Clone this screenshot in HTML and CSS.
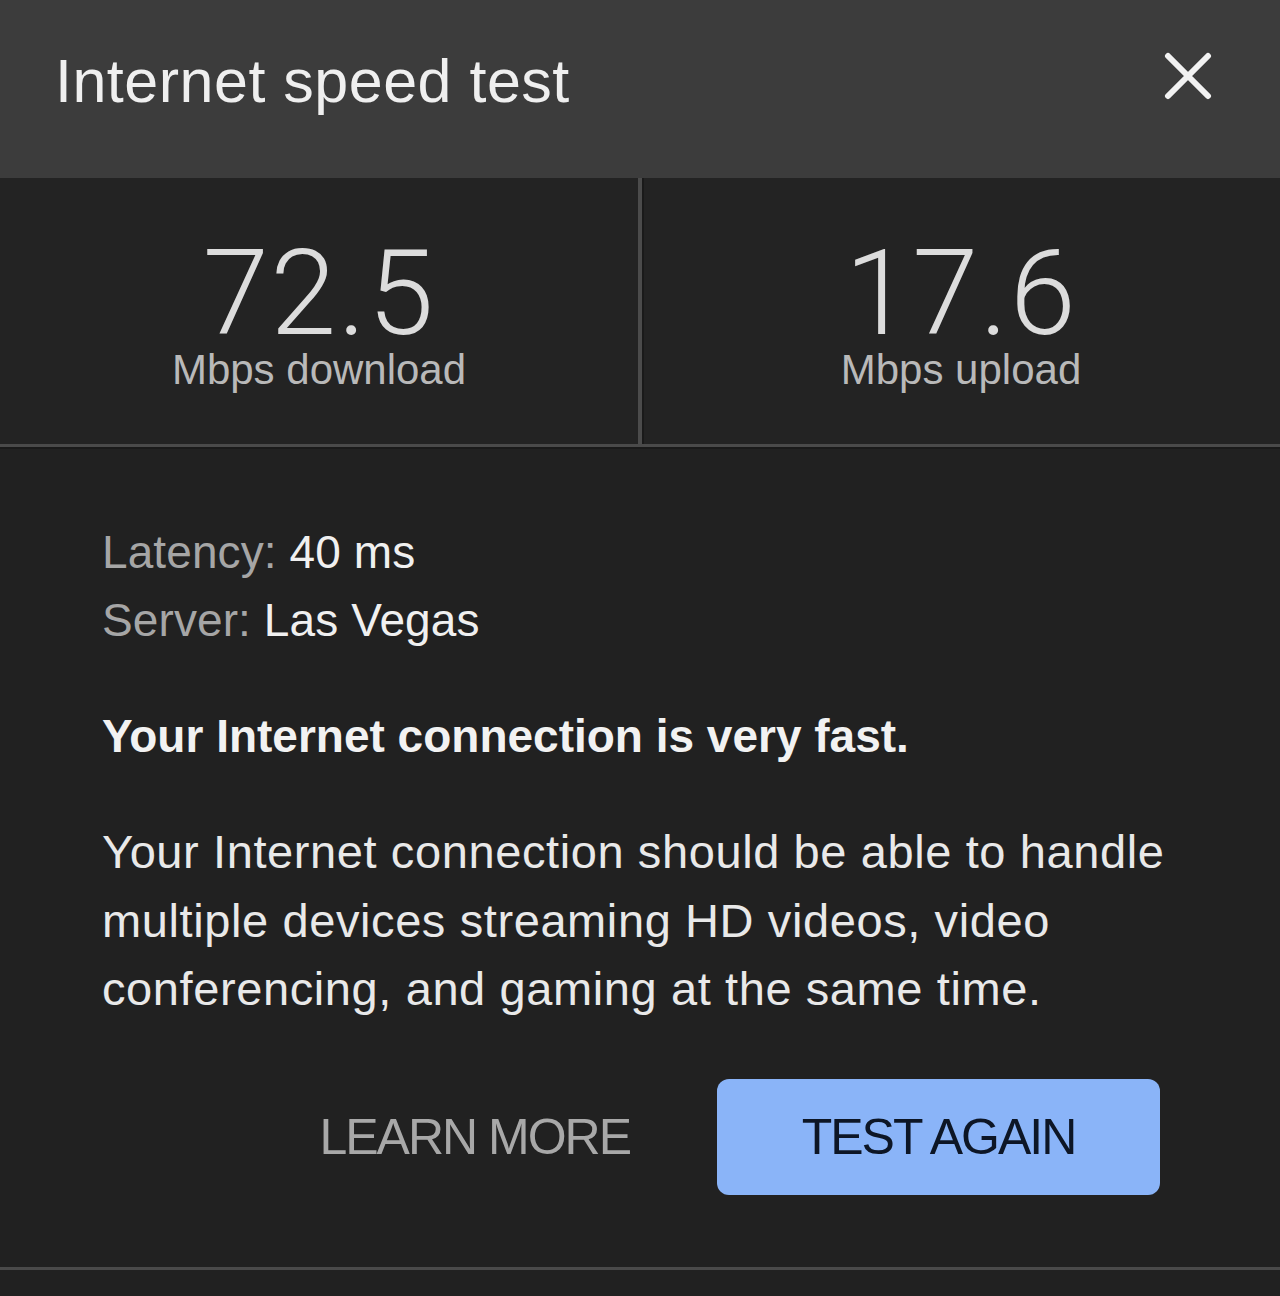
FILE: index.html
```html
<!DOCTYPE html>
<html lang="en">
<head>
  <meta charset="UTF-8">
  <title>Internet speed test</title>
  <meta name="viewport" content="width=device-width, initial-scale=1.0">
  <link rel="stylesheet" href="styles.css">
</head>
<body>
  <div class="header">
    <h1>Internet speed test</h1>
    <button class="close" aria-label="Close">
      <svg width="48" height="48" viewBox="0 0 48 48">
        <path d="M4 4 L44 44 M44 4 L4 44" stroke="#f2f2f2" stroke-width="6" stroke-linecap="round" fill="none"/>
      </svg>
    </button>
  </div>

  <div class="stats">
    <div class="stat">
      <div class="value">72.5</div>
      <div class="unit">Mbps download</div>
    </div>
    <div class="stat">
      <div class="value">17.6</div>
      <div class="unit">Mbps upload</div>
    </div>
  </div>

  <div class="content">
    <div class="info">
      <div><span class="label">Latency:</span> 40 ms</div>
      <div><span class="label">Server:</span> Las Vegas</div>
    </div>

    <p class="verdict">Your Internet connection is very fast.</p>

    <p class="desc">Your Internet connection should be able to handle multiple devices streaming HD videos, video conferencing, and gaming at the same time.</p>

    <div class="actions">
      <button class="link-btn">LEARN MORE</button>
      <button class="primary-btn">TEST AGAIN</button>
    </div>
  </div>

  <div class="bottom-line"></div>
</body>
</html>
```

FILE: styles.css
```css
body {
  font-family: 'Liberation Sans', Arial, sans-serif;
  margin: 0;
  background: #212121;
  color: #eeeeee;
  height: 1296px;
  overflow: hidden;
}
.header {
  height: 178px;
  box-sizing: border-box;
  background: #3c3c3c;
  display: flex;
  justify-content: space-between;
  align-items: flex-start;
  padding: 51px 68px 0 55px;
}
.header h1 {
  margin: 0;
  font-size: 61px;
  line-height: 61px;
  font-weight: normal;
  color: #efefef;
  letter-spacing: 0.5px;
}
.close {
  background: none;
  border: none;
  padding: 0;
  margin-top: 1px;
  width: 48px;
  height: 48px;
  cursor: pointer;
}
.close svg { display: block; }
.stats {
  display: flex;
  background: #232323;
  border-bottom: 3px solid #4a4a4a;
  box-shadow: 0 2px 0 #1a1a1a;
}
.stat {
  flex: 1;
  text-align: center;
  padding: 61px 0 53px;
}
.stat:first-child {
  border-right: 4px solid #4b4b4b;
  box-shadow: 2px 0 0 #1a1a1a;
}
.value {
  font-family: Roboto, 'Liberation Sans', sans-serif;
  font-weight: 300;
  font-size: 119px;
  line-height: 110px;
  color: #dcdcdc;
  letter-spacing: 1.5px;
}
.unit {
  font-size: 42px;
  line-height: 42px;
  color: #b9b9b9;
}
.content {
  padding: 71px 110px 72px 102px;
}
.info {
  font-size: 46px;
  line-height: 68px;
  color: #f0f0f0;
  letter-spacing: 0.1px;
}
.label {
  color: #a6a6a6;
}
.verdict {
  margin: 48px 0 0;
  font-size: 46px;
  line-height: 68px;
  font-weight: bold;
  color: #f2f2f2;
}
.desc {
  margin: 48px 0 0;
  font-size: 47px;
  line-height: 68.5px;
  color: #e9e9e9;
  letter-spacing: 0.6px;
}
.actions {
  display: flex;
  justify-content: flex-end;
  align-items: center;
  gap: 87px;
  margin-top: 55px;
  padding-right: 10px;
}
.actions button {
  font-family: inherit;
  font-size: 50px;
  letter-spacing: -2px;
  border: none;
  cursor: pointer;
}
.link-btn {
  background: none;
  color: #a8a8a8;
  padding: 0;
}
.primary-btn {
  width: 443px;
  height: 116px;
  background: #8ab4f8;
  color: #0d1626;
  border-radius: 12px;
}
.bottom-line {
  height: 3px;
  background: #4a4a4a;
}
```
